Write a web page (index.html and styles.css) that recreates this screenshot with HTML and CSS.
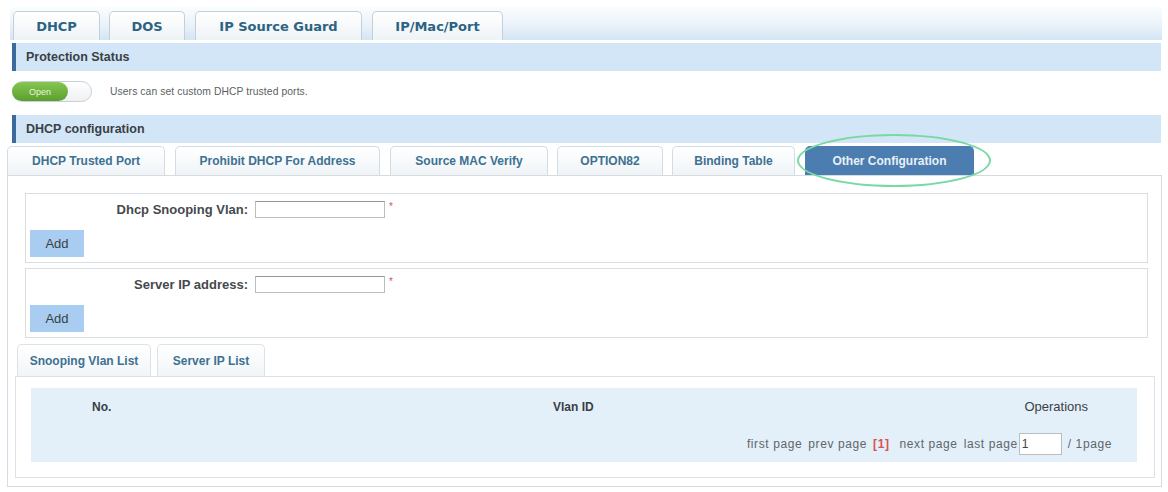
FILE: index.html
```html
<!DOCTYPE html>
<html>
<head>
<meta charset="utf-8">
<link rel="stylesheet" href="styles.css">
</head>
<body>
<div class="page">
  <div class="topbar">
    <div class="ttab t1">DHCP</div>
    <div class="ttab t2">DOS</div>
    <div class="ttab t3">IP Source Guard</div>
    <div class="ttab t4">IP/Mac/Port</div>
  </div>

  <div class="sec">Protection Status</div>
  <div class="status-row">
    <div class="toggle"><div class="toggle-on">Open</div></div>
    <span class="status-text">Users can set custom DHCP trusted ports.</span>
  </div>

  <div class="sec">DHCP configuration</div>
  <div class="subtabs">
    <div class="stab s1">DHCP Trusted Port</div>
    <div class="stab s2">Prohibit DHCP For Address</div>
    <div class="stab s3">Source MAC Verify</div>
    <div class="stab s4">OPTION82</div>
    <div class="stab s5">Binding Table</div>
    <div class="stab s6 active">Other Configuration<span class="ring"></span></div>
  </div>

  <div class="panel">
    <div class="forms">
      <div class="fbox">
        <div class="frow">
          <label class="flabel">Dhcp Snooping Vlan:</label>
          <input class="finput" type="text">
          <span class="req">*</span>
        </div>
        <button class="addbtn">Add</button>
      </div>
      <div class="fbox">
        <div class="frow">
          <label class="flabel">Server IP address:</label>
          <input class="finput" type="text">
          <span class="req">*</span>
        </div>
        <button class="addbtn">Add</button>
      </div>
    </div>

    <div class="lists">
      <div class="ltabs">
        <div class="ltab l1">Snooping Vlan List</div>
        <div class="ltab l2">Server IP List</div>
      </div>
      <div class="lbox">
        <div class="tbl">
          <div class="thead">
            <div class="c1">No.</div>
            <div class="c2">Vlan ID</div>
            <div class="c3">Operations</div>
          </div>
          <div class="pager">
            <span>first page</span>
            <span>prev page</span>
            <span class="cur">[1]</span>
            <span class="gap">next page</span>
            <span class="last">last page<input class="pinput" type="text" value="1"></span>
            <span>/ 1page</span>
          </div>
        </div>
      </div>
    </div>
  </div>
</div>
</body>
</html>
```

FILE: styles.css
```css
* { box-sizing: border-box; }
body {
  margin: 0;
  background: #ffffff;
  font-family: "Liberation Sans", Arial, sans-serif;
  color: #333;
}
.page {
  width: 1168px;
  padding: 7px 6px 0 7px;
}

/* top tabs */
.topbar {
  display: flex;
  align-items: flex-end;
  height: 33px;
  margin: 0 0 0 3px;
  padding-left: 3px;
  background: linear-gradient(to bottom, #fbfdfe 0%, #eaf2f9 55%, #d3e5f4 100%);
}
.ttab {
  height: 29px;
  border: 1px solid #c3d0da;
  border-bottom: none;
  border-radius: 5px 5px 0 0;
  background: linear-gradient(to bottom, #ffffff, #eef3f6);
  font-family: "DejaVu Sans", Verdana, sans-serif;
  font-weight: bold;
  font-size: 13px;
  color: #2a6482;
  display: flex;
  align-items: center;
  justify-content: center;
}
.t1 { width: 87px; }
.t2 { width: 76px; margin-left: 9px; }
.t3 { width: 167px; margin-left: 10px; }
.t4 { width: 131px; margin-left: 10px; }

/* section bars */
.sec {
  margin: 3px 1px 0 5px;
  height: 28px;
  background: #d2e6f7;
  border-left: 4px solid #3a6b9c;
  padding-left: 10px;
  display: flex;
  align-items: center;
  font-size: 12.5px;
  font-weight: bold;
  color: #3a3f44;
}

.status-row {
  height: 41px;
  display: flex;
  align-items: center;
  padding-left: 5px;
}
.toggle {
  width: 80px;
  height: 21px;
  border: 1px solid #c9d0d5;
  border-radius: 11px;
  background: linear-gradient(to bottom, #ffffff, #eef0f2);
}
.toggle-on {
  width: 56px;
  height: 19px;
  margin-left: -1px;
  border-radius: 10px;
  background: linear-gradient(to bottom, #86c652, #5a9f2c);
  color: #e8f5dd;
  font-size: 9px;
  display: flex;
  align-items: center;
  justify-content: center;
}
.status-text {
  margin-left: 18px;
  font-size: 10.3px;
  letter-spacing: 0.1px;
  color: #5a5f63;
}

/* sub tabs */
.subtabs {
  display: flex;
  align-items: flex-end;
  margin-top: 3px;
  height: 29px;
}
.stab {
  height: 29px;
  border: 1px solid #d2dce3;
  border-bottom: none;
  border-radius: 5px 5px 0 0;
  background: linear-gradient(to bottom, #ffffff, #f0f4f7);
  font-size: 12px;
  font-weight: bold;
  color: #3d7192;
  display: flex;
  align-items: center;
  justify-content: center;
  position: relative;
}
.s1 { width: 158px; }
.s2 { width: 205px; margin-left: 10px; }
.s3 { width: 158px; margin-left: 10px; }
.s4 { width: 106px; margin-left: 9px; }
.s5 { width: 123px; margin-left: 9px; }
.s6 { width: 169px; margin-left: 10px; }
.stab.active {
  background: #4b7db0;
  border-color: #4b7db0;
  color: #e9f0f7;
}
.ring {
  position: absolute;
  left: -9px;
  top: -13px;
  width: 194px;
  height: 53px;
  border: 2.5px solid #78d9a2;
  border-radius: 50%;
  pointer-events: none;
}

/* panel */
.panel {
  height: 312px;
  border: 1px solid #d5dce1;
}
.forms {
  padding: 17px 13px 0 17px;
}
.fbox {
  height: 70px;
  border: 1px solid #dadee2;
  padding: 7px 0 0 4px;
}
.fbox + .fbox { margin-top: 5px; }
.frow {
  display: flex;
  align-items: center;
  height: 17px;
}
.flabel {
  width: 218px;
  text-align: right;
  font-size: 13px;
  font-weight: bold;
  color: #45494d;
}
.finput {
  margin-left: 7px;
  width: 130px;
  height: 17px;
  border: 1px solid #b9bec2;
  border-top-color: #8f969b;
  padding: 0 2px;
}
.req {
  margin-left: 4px;
  color: #d9534f;
  font-size: 10px;
  align-self: flex-start;
}
.addbtn {
  display: block;
  margin-top: 12px;
  width: 54px;
  height: 27px;
  border: none;
  background: #a8cdf0;
  font-family: "Liberation Sans", Arial, sans-serif;
  font-size: 13px;
  color: #3a3f44;
  padding: 0;
}

/* lists */
.lists {
  margin: 6px 6px 0 7px;
}
.ltabs {
  display: flex;
  height: 32px;
  padding-left: 2px;
}
.ltab {
  height: 32px;
  border: 1px solid #dde3e7;
  border-bottom: none;
  border-radius: 5px 5px 0 0;
  background: linear-gradient(to bottom, #ffffff, #f1f5f8);
  font-size: 12px;
  font-weight: bold;
  color: #3d7192;
  display: flex;
  align-items: center;
  justify-content: center;
}
.l1 { width: 134px; }
.l2 { width: 108px; margin-left: 6px; }
.lbox {
  height: 102px;
  border: 1px solid #dce2e6;
  padding: 11px 17px 0 15px;
}
.tbl {
  height: 74px;
  background: #e3eff9;
}
.thead {
  display: grid;
  grid-template-columns: 522px 1fr auto;
  height: 37px;
  align-items: center;
  font-size: 12px;
  color: #3a3f44;
}
.c1 { padding-left: 61px; font-weight: bold; }
.c2 { font-weight: bold; }
.c3 { padding-right: 49px; font-size: 13px; }
.pager {
  height: 37px;
  display: flex;
  align-items: center;
  justify-content: flex-end;
  padding-right: 25px;
  font-size: 12px;
  letter-spacing: 0.6px;
  color: #60666b;
  gap: 6px;
}
.pager .cur { color: #d9534f; font-weight: bold; }
.pager .gap { margin-left: 4px; }
.pager .last { display: flex; align-items: center; }
.pinput {
  width: 43px;
  height: 22px;
  margin-left: 1px;
  border: 1px solid #b9bec2;
  font-size: 12px;
  letter-spacing: 0;
  padding: 0 2px;
  color: #444;
}
```
